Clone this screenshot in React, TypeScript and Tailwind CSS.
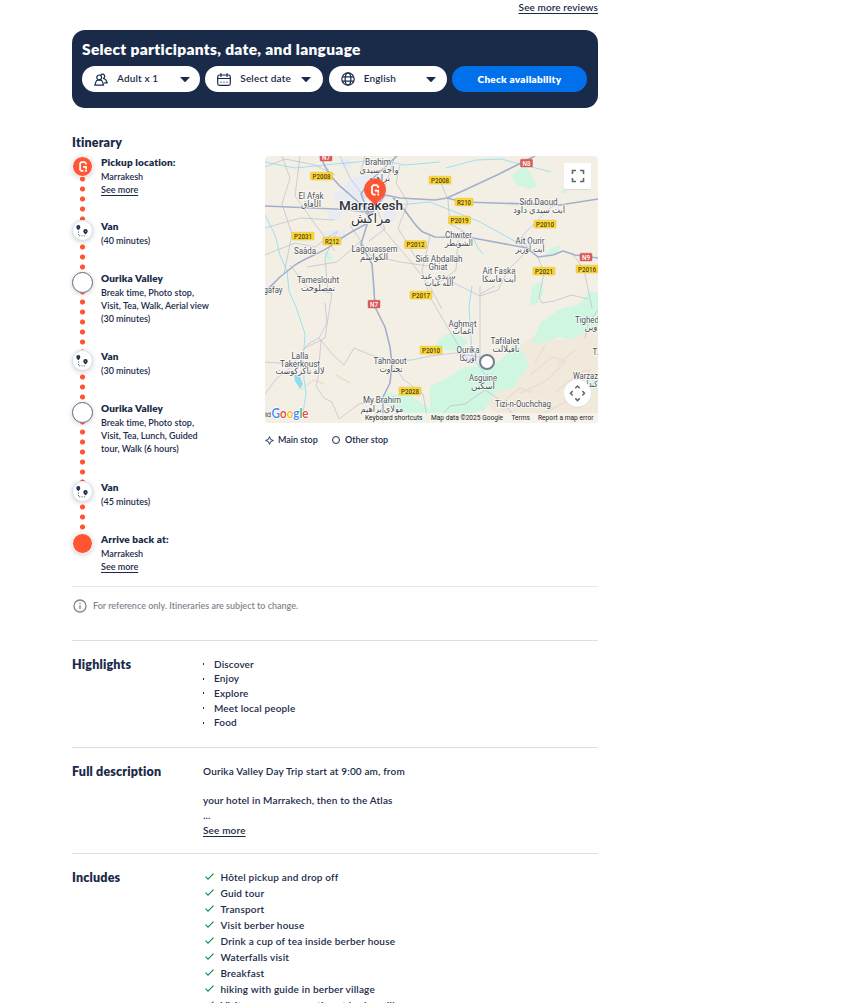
import React from 'react';

const Caret = () => (
  <svg className="h-[5px] w-[10px] shrink-0" viewBox="0 0 10 5"><path d="M0 0h10L5.8 4.6a1.1 1.1 0 0 1-1.6 0z" fill="#1a2b49" /></svg>
);

const People = () => (
  <svg className="h-[13px] w-[14px] shrink-0" viewBox="0 0 14 13" fill="none" stroke="#1a2b49" strokeWidth="1.2" strokeLinecap="round" strokeLinejoin="round">
    <circle cx="5.2" cy="4.4" r="2.4" /><path d="M.8 12.200l1.100-3.300c.4-1.100 1.300-1.700 2.300-1.700h2c1 0 1.900.6 2.300 1.700l1.100 3.300zM7 1.800A2.200 2.200 0 1 1 9.600 5.300M9.600 5.600c1.800.2 2.700 1.200 3.600 4.300h-2.600" />
  </svg>
);

const Calendar = () => (
  <svg className="h-[13px] w-[14px] shrink-0" viewBox="0 0 14 13" fill="none" stroke="#1a2b49" strokeWidth="1.2" strokeLinecap="round">
    <rect x=".7" y="2" width="12.600" height="10.400" rx="1.800" /><path d="M.7 5.500h12.600M3.900.6v2.800M10.100.6v2.800" /><path d="M4 9.200h.01M7 9.200h.01M10 9.200h.01" strokeWidth="1.300" />
  </svg>
);

const Globe = () => (
  <svg className="size-[14px] shrink-0" viewBox="0 0 14 14" fill="none" stroke="#1a2b49" strokeWidth="1.2">
    <circle cx="7" cy="7" r="6.200" /><ellipse cx="7" cy="7" rx="2.900" ry="6.200" /><path d="M1.300 4.800h11.400M1.300 9.200h11.400" />
  </svg>
);

const GMark = ({ className }: { className: string }) => (
  <svg className={className} viewBox="0 0 8 11" fill="none" stroke="#fff" strokeWidth="1.700"><path d="M7 3.600V2.500L5.700 1.100H2.400L1.100 2.400v6.200L2.400 9.900H4.500M4 5.900h3v2M7 8.600v2.200" /></svg>
);

const Route = () => (
  <svg className="h-[12px] w-[13px]" viewBox="0 0 13 12">
    <path d="M2.300 0a2 2 0 0 1 2 2c0 1.500-1.200 2-2 3.300C1.500 4 .3 3.500.3 2a2 2 0 0 1 2-2zM9.500 4a2.200 2.200 0 0 1 2.200 2.200c0 1.600-1.400 2-2.200 3.300-.8-1.300-2.200-1.700-2.200-3.300A2.200 2.200 0 0 1 9.500 4z" fill="#1a2b49" />
    <circle cx="2.300" cy="2" r=".6" fill="#8894aa" /><circle cx="9.500" cy="6.200" r=".7" fill="#8894aa" />
    <path d="M2.500 6.500v4.300h7" fill="none" stroke="#63708a" strokeWidth="1" strokeDasharray="1.200 1.200" />
  </svg>
);

type Step = { kind: 'g' | 'van' | 'stop' | 'end'; title: string; lines: string[]; more?: boolean; h: string; dots: string };
const steps: Step[] = [
  { kind: 'g', title: 'Pickup location:', lines: ['Marrakesh'], more: true, h: 'h-[64px]', dots: 'bg-[position:0_-3px]' },
  { kind: 'van', title: 'Van', lines: ['(40 minutes)'], h: 'h-[52px]', dots: 'bg-[position:0_1px]' },
  { kind: 'stop', title: 'Ourika Valley', lines: ['Break time, Photo stop,', 'Visit, Tea, Walk, Aerial view', '(30 minutes)'], h: 'h-[78px]', dots: 'bg-[position:0_4px]' },
  { kind: 'van', title: 'Van', lines: ['(30 minutes)'], h: 'h-[52px]', dots: 'bg-[position:0_1px]' },
  { kind: 'stop', title: 'Ourika Valley', lines: ['Break time, Photo stop,', 'Visit, Tea, Lunch, Guided', 'tour, Walk (6 hours)'], h: 'h-[79px]', dots: 'bg-[position:0_4px]' },
  { kind: 'van', title: 'Van', lines: ['(45 minutes)'], h: 'h-[52px]', dots: 'bg-[position:0_0px]' },
  { kind: 'end', title: 'Arrive back at:', lines: ['Marrakesh'], more: true, h: 'h-[53px]', dots: '' },
];

const circle = {
  g: 'bg-[#ff5533] border border-white',
  van: 'bg-white border border-[#dcdfe4]',
  stop: 'bg-white border border-[#63687a]',
  end: 'bg-[#ff5533] border border-white',
};

const StepRow = ({ s }: { s: Step }) => (
  <div className={`flex gap-2 ${s.h}`}>
    <div className="flex w-[21px] shrink-0 flex-col items-center">
      <div className={`flex size-[21px] shrink-0 items-center justify-center rounded-full shadow-[0_1px_5px_rgba(26,43,73,0.22)] ${circle[s.kind]}`}>
        {s.kind === 'g' && <GMark className="h-[11px] w-[8px]" />}
        {s.kind === 'van' && <Route />}
      </div>
      {s.kind !== 'end' && <div className={`w-[5px] flex-1 bg-[radial-gradient(circle,#ff5533_2.2px,transparent_2.9px)] bg-[length:5px_10px] ${s.dots}`} />}
    </div>
    <div className="whitespace-nowrap pt-[0.4px] text-[9px] font-semibold leading-[13.2px]">
      <p className="text-[10px] font-extrabold tracking-[0.14px]">{s.title}</p>
      {s.lines.map((l) => <p key={l}>{l}</p>)}
      {s.more && <p className="underline underline-offset-2">See more</p>}
    </div>
  </div>
);

const minorRoads = [
  'M265 167l20-8 30 6 20 10M282 156l8 22-8 26 10 30-8 40', 'M300 156l-5 40 25 35 15 20M265 228l35-10 35 2',
  'M340 156l10 22 15 20M365 156l-5 18M395 156l-8 25-8 20', 'M400 165l-4 18 12 20-10 25 18 30',
  'M265 255l30-12 20 4 22-16M290 265l20 25 22 3-4 25-3 20-20 10', 'M337 232l-12 25 3 36M362 240l-25 22-30 5',
  'M350 225l20 30 30 7 28 4M378 223l34 40 18 24 12 22', 'M430 236l-8 35 8 26 22 38 18 28M458 240l-2 30-20 15',
  'M528 250l-20 20-10 20-18 6-30-15', 'M527 248l-5-12 28-28 8-5', 'M440 180l8 20 2 24 15 8',
  'M538 257l6 16-5 25 3 5 12-2 18-6 16 4M572 253l12 17 8 38', 'M480 286v76M480 294l15-8',
  'M265 362l28 2 15-20 11-6 15 18 10 9 10-17 17 7 21 6 20-1 18-4 25-3 29 5',
  'M319 338l8-15-2-20M265 394l12-16 16-12M321 340l-3 38-2 8 8 12 8 4 7 17 20-15 25-4', 'M393 364l10 15 20 15 5 29',
  'M485 390l-20 14-15 2-8 9M485 390l18 12 15 19', 'M375 204l10 25-16 12M350 210l24 5', 'M598 310l-10 14-3 14',
];
const mainRoads = [
  'M320 156c8 19 17 29 28 37l16 14 5 11', 'M265 292l15-15 15-12c16-10 30-13 44-25 8-6 14-9 27-16',
  'M265 206l70 3 40 3', 'M370 215l15-20 15 3 35 2 12-2 20-9 30-14 38-19', 'M447 198l16 4 97 3 38-6',
  'M393 198c12 8 20 28 30 34l12 5 38 1 54 10 11 9 15-2 10-4 12 4 23 3', 'M397 156l-28 26-8 12 8 20',
  'M369 218l-8 26 11 20 2 26 1 17 10 20 5 20 2 16-2 20-7 14v26',
];
const rivers = ['M265 215l10 20 5 20 7 16 2 20 7 16 9 27-2 28 1 17 2 14-3 20', 'M265 162l30 6 40-4 45-4 25 5 35-3', 'M398 205l32-3 50 20 40 22 18 13', 'M446 168l30-8 25-1 50 13', 'M473 238l5 10 5 6', 'M472 286l-3 20 3 50 14 20'];
const greens = [
  'M511 176l14-12 8 14 4 8-8 3-12-4z', 'M532 343l8-20 20-14 18-4 12-14 8 2v32l-26 14-14-2-14 6z', 'M436 343l8-8 12-2 12 8-8 10-24-2z', 'M430 386l18-8 14-10 33-4 10-8 8-12 12 10 4 12-8 10-8 12-18 4-10 18-25 5-18 8-12-2z',
  'M384 393l26 2 20 14 6 14h-24l-12-14-14-4z', 'M323 250l8 4 2 7-6-2z', 'M358 242l7 4-4 3z', 'M545 255l6-7 10-3-2 6-12 6z', 'M530 303l2-16 8-6 4 10-6 12-6 3z', 'M590 374l8 8v10l-10-6z', 'M560 192l9-5-3 7z',
];

const badges: [string, number, number, 'y' | 'r'][] = [
  ['P2008', 321.500, 176, 'y'], ['P2008', 440, 180, 'y'], ['R210', 464, 202, 'y'], ['P2019', 459.500, 220, 'y'], ['P2010', 545, 224, 'y'],
  ['P2031', 303, 236, 'y'], ['R212', 332, 241, 'y'], ['P2012', 415.500, 244.500, 'y'], ['P2021', 544, 271, 'y'], ['P2016', 587, 269, 'y'],
  ['P2017', 421, 295, 'y'], ['P2010', 431, 350, 'y'], ['P2028', 410, 391, 'y'], ['N7', 326, 157, 'r'], ['N8', 526.500, 163, 'r'], ['N9', 586, 257, 'r'], ['N7', 374, 304, 'r'],
];
const places: [string, number, number, number][] = [
  ['Brahim', 378, 165, 26], ['واحة سيدي', 379, 173, 39], ['براهيم', 379, 181, 22], ['El Afak', 311, 199, 25], ['الآفاق', 311, 207, 20],
  ['Saâda', 305, 253.500, 22], ['Lagouassem', 374.500, 251.500, 46], ['الكواسم', 374, 260, 28], ['Tameslouht', 318, 283, 42], ['تمصلوحت', 318, 291, 34],
  ['Sidi Abdallah', 439, 262, 47], ['Ghiat', 438, 270, 19], ['سيدي عبد', 438, 279, 35], ['الله غيات', 439, 286, 29], ['Chwiter', 458.500, 238, 27], ['الشويطر', 459, 246, 28],
  ['Sidi Daoud', 538.500, 204.500, 38], ['أيت سيدي داود', 539, 213, 52], ['Ait Ourir', 530, 244, 29], ['أيت أورير', 530, 252, 29], ['Ait Faska', 499, 274, 33], ['أيت فاسكا', 499, 282, 34],
  ['Aghmat', 462.500, 326.500, 28], ['أغمات', 463, 334, 21], ['Ourika', 468, 353, 23], ['أوريكا', 468, 361, 17], ['Tafilalet', 505, 344, 29], ['تافيلالت', 506, 352, 27],
  ['Asguine', 483, 381, 28], ['أسكين', 483, 389, 24], ['Tizi-n-Ouchchag', 523, 406.500, 56], ['Tahnaout', 390, 364, 33], ['تحناوت', 391, 372, 23],
  ['My Brahim', 382, 403, 38], ['مولاي براهيم', 382, 411.500, 43], ['Lalla', 300, 358.500, 17], ['Takerkoust', 300, 366.500, 40], ['لالة تاكركوست', 300, 374, 49],
  ['gafay', 273, 292.500, 19], ['Tighed', 587, 322.500, 24], ['وين', 591, 330, 13], ['T.', 595.500, 355, 6], ['Warzaz', 585.500, 378.500, 25], ['كندا', 592, 387, 11],
];

const MapView = () => (
  <svg className="block h-[267px] w-[333px] rounded" viewBox="265 156 333 267" fontFamily="Roboto, 'Noto Sans', 'DejaVu Sans', sans-serif">
    <rect x="265" y="156" width="333" height="267" fill="#f4efe5" />
    <path d="M500 360l35-25 25 5 38-15v98h-90l-20-18z" fill="#f1e9dc" />
    {greens.map((d) => <path key={d} d={d} fill="#cff6e1" />)}
    <path d="M345 184l8-8 22-2 10 8 2 10-6 12-20 4-18-6zM322 232l22-2 4 10-18 4zM332 196l8-6 6 10-8 6zM340 160l8-2 4 8-10 4zM328 210l14 2-2 8-12-2zM467 352l10 2-2 8-12-2zM385 208l12 4-4 10-12 2zM522 236l10 2 2 8-12 0z" fill="#e9ebf2" />
    <path d="M530 375l22-18 14 4-20 20-26 12M556 392l24-20 10-2-20 30-32 16M500 404l20-16 12 4M545 345l-10 18M575 350l-18 15M300 390l14-10 10 4M336 375l14 8" fill="none" stroke="#eadfcf" strokeWidth="1.500" />
    {rivers.map((d) => <path key={d} d={d} fill="none" stroke="#9be0f2" strokeWidth="1" />)}
    <path d="M294 374l6 3 3 7-3 5-5-8z" fill="#8fdcf0" />
    {minorRoads.map((d) => <path key={d} d={d} fill="none" stroke="#b8bfce" strokeWidth=".7" strokeLinejoin="round" />)}
    {mainRoads.map((d) => <path key={d} d={d} fill="none" stroke="#a3afcb" strokeWidth="1.600" strokeLinejoin="round" />)}
    {badges.map(([t, x, y, c], i) => {
      const w = t.length === 5 ? 22 : t.length === 4 ? 18 : 12;
      return (
        <g key={i}>
          <rect x={x - w / 2} y={y - 3.800} width={w} height="7.800" rx="1" fill={c === 'y' ? '#fdd835' : '#dc5a5a'} stroke={c === 'y' ? '#d8b222' : '#c94c4c'} strokeWidth=".4" />
          <text x={x} y={y + 2.500} textAnchor="middle" fontSize="7" fontWeight="500" fill={c === 'y' ? '#4a4020' : '#fff'} textLength={w - 4} lengthAdjust="spacingAndGlyphs">{t}</text>
        </g>
      );
    })}
    {places.map(([t, x, y, w], i) => (
      <text key={i} x={x} y={y} textAnchor="middle" fontSize="8.800" fill="#4b4f57" stroke="#fff" strokeWidth="1.600" strokeOpacity=".75" paintOrder="stroke" textLength={w} lengthAdjust="spacingAndGlyphs">{t}</text>
    ))}
    <g textAnchor="middle" fill="#30343b" stroke="#fff" strokeWidth="2" strokeOpacity=".75" paintOrder="stroke">
      <text x="371" y="209.500" fontSize="13" fontWeight="500" textLength="64" lengthAdjust="spacingAndGlyphs">Marrakesh</text>
      <text x="371" y="222.500" fontSize="13" textLength="40" lengthAdjust="spacingAndGlyphs">مراكش</text>
    </g>
    <path d="M375 206c-2-5-11-8-11-16.500a11 11 0 0 1 22 0c0 8.500-9 11.500-11 16.500z" fill="#ff5533" />
    <path d="M378.200 188v-1.300l-1.500-1.500h-3.200l-1.500 1.500v6.400l1.500 1.500h2.200M374.800 190.700h3.400v2M378.200 193.400v2.200" fill="none" stroke="#fff" strokeWidth="1.800" />
    <circle cx="487" cy="362" r="7" fill="#fff" stroke="#777e8c" strokeWidth="2" />
    <rect x="564" y="164" width="27" height="26" rx="1" fill="#dedbd4" /><rect x="564" y="163" width="27" height="26" rx="1" fill="#fff" />
    <path d="M572.500 174v-3.500h3.500M580 170.500h3.500v3.500M583.500 178v3.500h-3.500M576 181.500h-3.500V178" fill="none" stroke="#62666b" strokeWidth="1.600" />
    <circle cx="577.500" cy="394" r="13.700" fill="#dedbd4" /><circle cx="577.500" cy="393.300" r="13.500" fill="#fff" />
    <path d="M575.300 388.200l2.200-2.200 2.200 2.200M575.300 398.400l2.200 2.200 2.200-2.200M572.700 391l-2.200 2.300 2.200 2.300M582.300 391l2.200 2.300-2.200 2.300" fill="none" stroke="#666" strokeWidth="1.500" />
    <rect x="362" y="413" width="236" height="10" fill="#f7f5ef" fillOpacity=".8" />
    <text x="265" y="416.500" fontSize="8" fill="#4b4f57" textLength="6">id</text>
    <text x="271.500" y="418" fontFamily="Lato, sans-serif" fontSize="13" fontWeight="600" textLength="37" lengthAdjust="spacingAndGlyphs" stroke="#fff" strokeWidth="1.500" paintOrder="stroke">
      <tspan fill="#4285f4">G</tspan><tspan fill="#ea4335">o</tspan><tspan fill="#fbbc04">o</tspan><tspan fill="#4285f4">g</tspan><tspan fill="#34a853">l</tspan><tspan fill="#ea4335">e</tspan>
    </text>
    <g fontSize="7" fill="#1c1c1c">
      <text x="365" y="420" textLength="57.500" lengthAdjust="spacingAndGlyphs">Keyboard shortcuts</text>
      <text x="431" y="420" textLength="72" lengthAdjust="spacingAndGlyphs">Map data ©2025 Google</text>
      <text x="511.500" y="420" textLength="18.500" lengthAdjust="spacingAndGlyphs">Terms</text>
      <text x="538" y="420" textLength="55.500" lengthAdjust="spacingAndGlyphs">Report a map error</text>
    </g>
  </svg>
);

const Heading = ({ children }: { children: React.ReactNode }) => (
  <h2 className="w-[131px] shrink-0 text-[12.500px] font-extrabold leading-4 tracking-[0.18px]">{children}</h2>
);

const highlights = ['Discover', 'Enjoy', 'Explore', 'Meet local people', 'Food'];
const includes = ['Hôtel pickup and drop off', 'Guid tour', 'Transport', 'Visit berber house', 'Drink a cup of tea inside berber house', 'Waterfalls visit', 'Breakfast', 'hiking with guide in berber village', 'Visit women cooperative at berber village'];

const Select = ({ icon, label, pad }: { icon: React.ReactNode; label: string; pad: string }) => (
  <div className={`flex h-[26px] w-[118px] items-center rounded-full bg-white pl-3 ${pad}`}>
    {icon}
    <span className="-mt-[2px] ml-[9px] flex-1 whitespace-nowrap text-[10px] font-semibold leading-4 tracking-[0.15px]">{label}</span>
    <Caret />
  </div>
);

export default function App() {
  return (
    <div className="h-[1003px] overflow-hidden bg-white font-['Lato',sans-serif] text-[#1a2b49] [font-variant-ligatures:none]">
      <main className="ml-[72px] w-[526px]">
        <div className="h-[30px] text-right text-[10px] font-semibold leading-[15px] tracking-[0.1px]"><a className="underline underline-offset-2">See more reviews</a></div>
        <section className="h-[78px] rounded-[13px] bg-[#1a2b49] px-[10px] pt-[9px]">
          <h2 className="whitespace-nowrap text-[15.500px] font-extrabold leading-5 tracking-[0.3px] text-white">Select participants, date, and language</h2>
          <div className="mt-[7px] flex w-[505px] justify-between">
            <Select icon={<People />} label="Adult x 1" pad="pr-[10px]" />
            <Select icon={<Calendar />} label="Select date" pad="pr-3" />
            <Select icon={<Globe />} label="English" pad="pr-[11px]" />
            <button className="h-[26px] w-[135px] rounded-full bg-[#0071eb] text-[10px] font-extrabold tracking-[0.25px] text-white">Check availability</button>
          </div>
        </section>
        <section className="mt-[27px] h-[452px] border-b border-[#e6e8ed]">
          <h2 className="h-[21px] text-[12.500px] font-extrabold leading-4 tracking-[0.2px]">Itinerary</h2>
          <div className="flex">
            <div className="w-[193px] shrink-0">{steps.map((s, i) => <StepRow key={i} s={s} />)}</div>
            <div>
              <MapView />
              <div className="mt-[9px] flex items-center text-[9px] font-semibold leading-4">
                <svg className="size-[9px]" viewBox="0 0 9 9" fill="none" stroke="#1a2b49" strokeWidth=".9"><path d="M4.500.6Q4.800 4.200 8.400 4.500 4.800 4.800 4.500 8.400 4.200 4.800.6 4.500 4.200 4.200 4.500.6z" /></svg>
                <span className="ml-[4px] w-[54px] whitespace-nowrap">Main stop</span>
                <span className="size-[8px] rounded-full border border-[#1a2b49]" />
                <span className="ml-[5px] whitespace-nowrap">Other stop</span>
              </div>
            </div>
          </div>
        </section>
        <p className="flex h-[54px] items-start gap-[6px] border-b border-[#dcdfe4] pl-px pt-[12px] text-[9px] font-semibold leading-[14px] text-[#83868f]">
          <svg className="size-[14px] shrink-0" viewBox="0 0 14 14" fill="none" stroke="#83868f" strokeWidth="1.300"><circle cx="7" cy="7" r="6" /><path d="M7 6.200v3.900M7 3.800v1.300" /></svg>
          For reference only. Itineraries are subject to change.
        </p>
        <section className="flex h-[107px] border-b border-[#dcdfe4] pt-4">
          <Heading>Highlights</Heading>
          <ul className="-mt-[0.500px] text-[10px] font-semibold leading-[14.700px] tracking-[0.15px]">
            {highlights.map((t) => <li key={t} className="flex items-center gap-[10px]"><span className="h-[2px] w-px bg-[#1a2b49]" />{t}</li>)}
          </ul>
        </section>
        <section className="flex h-[106px] border-b border-[#dcdfe4] pt-4">
          <Heading>Full description</Heading>
          <div className="-mt-[0.500px] text-[10px] font-semibold leading-[14.700px] tracking-[0.15px]">
            <p>Ourika Valley Day Trip start at 9:00 am, from</p>
            <p className="mt-[14.700px]">your hotel in Marrakech, then to the Atlas</p>
            <p>...</p>
            <a className="block pt-px underline underline-offset-2">See more</a>
          </div>
        </section>
        <section className="flex pt-4">
          <Heading>Includes</Heading>
          <ul className="-mt-[1.500px] text-[10px] font-semibold leading-4 tracking-[0.19px]">
            {includes.map((t) => (
              <li key={t} className="flex items-center whitespace-nowrap">
                <svg className="ml-[2px] mr-[6.500px] h-[7px] w-[9px]" viewBox="0 0 9 7" fill="none" stroke="#0a8a5f" strokeWidth="1.100"><path d="M.5 3.700L3 6.200 8.500.600" /></svg>
                {t}
              </li>
            ))}
          </ul>
        </section>
      </main>
    </div>
  );
}
